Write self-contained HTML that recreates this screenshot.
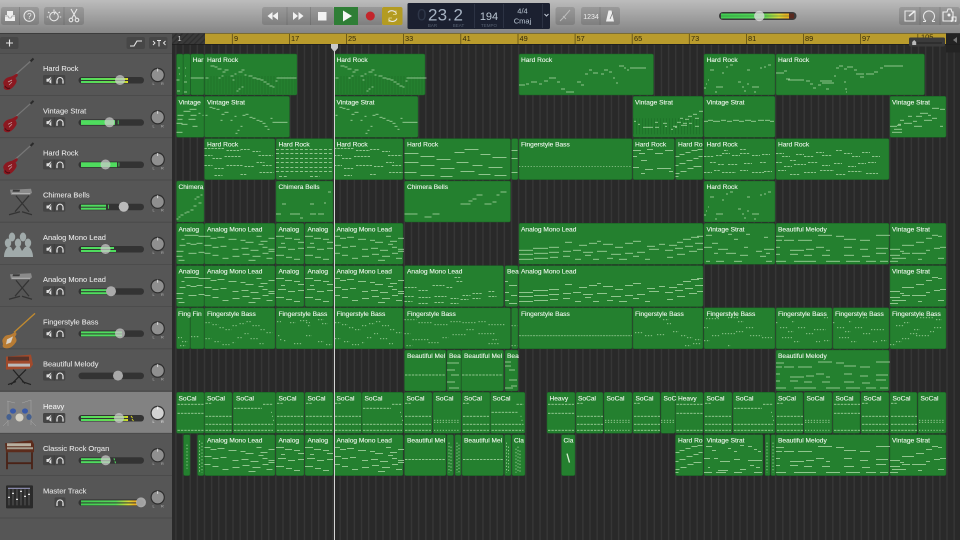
<!DOCTYPE html>
<html><head><meta charset="utf-8"><title>GarageBand</title>
<style>
html,body{margin:0;padding:0;background:#2a2a2a;width:960px;height:540px;overflow:hidden}
svg{display:block;filter:blur(.3px);font-family:"Liberation Sans",sans-serif}
.reg rect.r{fill:#24802f;stroke:#1b6225;stroke-width:.5}
.reg text{font-size:6.6px;fill:#eef6ec;stroke:#eef6ec;stroke-width:.12}
.n{fill:none;stroke:#b4dcae;stroke-width:.75}
.d{fill:none;stroke:#b4dcae;stroke-width:.75;stroke-dasharray:2.4 1}
.f{fill:none;stroke:#b4dcae;stroke-width:.75;stroke-dasharray:1.3 1.6}
.tn{font-size:7.5px;fill:#e6e6e6;stroke:#e6e6e6;stroke-width:.08}
.ic{fill:none;stroke:#e6e6e6;stroke-width:1.1}
.rn{font-size:7.4px;fill:#33290a}
.lcdl{font-size:4.5px;fill:#566070;text-anchor:middle}
</style></head><body>
<svg width="960" height="540" viewBox="0 0 960 540" xmlns="http://www.w3.org/2000/svg">
<defs>
<linearGradient id="tb" x1="0" y1="0" x2="0" y2="1"><stop offset="0" stop-color="#bcbcbc"/><stop offset="1" stop-color="#858585"/></linearGradient>
<linearGradient id="mg" x1="0" y1="0" x2="1" y2="0"><stop offset="0" stop-color="#3fce50"/><stop offset=".62" stop-color="#54d858"/><stop offset=".85" stop-color="#d8d838"/><stop offset=".95" stop-color="#e8b020"/></linearGradient>
<linearGradient id="mg2" x1="0" y1="0" x2="1" y2="0"><stop offset="0" stop-color="#4fdc5e"/><stop offset=".85" stop-color="#6fdc4e"/><stop offset="1" stop-color="#e6d820"/></linearGradient>
<pattern id="grid" patternUnits="userSpaceOnUse" x="175.2" y="0" width="7.14" height="10"><rect width="7.14" height="10" fill="#292929"/><rect width="1.4" height="10" fill="#363636"/></pattern>
<pattern id="hatch" patternUnits="userSpaceOnUse" width="4" height="4" patternTransform="rotate(45)"><rect width="4" height="4" fill="#3a3a3a"/><rect width="1.4" height="4" fill="#2e2e2e"/></pattern>

<!-- note patterns -->
<g id="hr1"><path d="M0 31h92" stroke="#1a6424" stroke-width="18" stroke-dasharray="1 2" fill="none" opacity=".4"/><path class="n" d="M1 24h3M6 12h4M10 13h3M13 15h4M18 18h3M20 16h4M14 24h2M17 22h2M26 22h3M30 20h2M28 26h2M34 18h4M37 16h3M32 37h2M34 35h2M37 33h2M40 21h2M44 22h4M48 24h4M52 25h4M56 26h3M59 28h3M62 30h3M65 32h3M68 33h2M71 27h2M72 24h20"/></g>
<path id="vs1" class="n" d="M1 19h2M5 11h3M8 12h3M12 13h3M17 18h3M20 16h4M16 24h2M30 20h2M26 24h2M38 19h3M41 18h3M45 21h3M48 22h3M52 24h3M55 25h3M58 27h3M60 30h3M63 33h2M66 22h2M68 26h2M70 26h13M36 30h2M33 34h2M31 37h2"/>
<path id="hr2" class="d" d="M0 10h20M22 12h14M36 11h10M48 13h8M54 17h14M0 17h8M8 20h10M20 18h16M0 27h8M10 30h10M22 27h16M40 28h10M52 24h8M58 27h10M10 37h8M36 36h6M55 34h14"/>
<path id="hr4" class="n" d="M6 16h4M18 19h2M22 13h2M26 11h3M43 16h3M56 14h2M60 13h2M64 11h3M4 26h1M2 30h1M0 34h2M12 33h7M34 28h3M38 33h2M40 37h2M43 30h2M50 38h2M48 33h7M11 38h2"/>
<path id="ap1" class="n" d="M0 13h6M6 15h6M13 14h7M24 16h8M36 17h5M41 19h8M52 13h5M54 21h5M56 18h7M64 15h6M0 22h7M8 24h6M16 23h6M28 26h6M37 25h7M46 27h8M58 24h5M64 26h6M0 30h6M8 32h6M18 35h6M28 33h7M38 31h7M48 33h8M58 30h6M64 28h6M44 37h7M62 35h6"/>
<path id="ap0" class="n" d="M8 12h6M14 12h8M22 13h6M3 22h6M10 20h4M14 21h6M20 20h6M0 28h7M12 30h8M22 29h6M0 33h6M2 37h6M5 16h3"/>
<path id="as" class="n" d="M0 13h8M9 15h7M18 16h6M2 24h8M12 26h7M22 25h6M0 32h8M10 34h6M18 36h6M5 20h4M22 19h6"/>
<path id="al" class="n" d="M0 27h14M14 25h15M30 24h10M46 19h7M60 22h8M70 20h8M78 18h4M84 21h10M96 24h8M106 20h8M114 18h8M128 23h8M140 21h6M150 22h8M158 19h6M164 16h8M172 14h8M178 13h6M0 31h14M15 30h14M30 29h10M44 28h8M54 27h8M64 29h10M78 28h10M92 31h10M106 30h8M118 29h8M130 26h10M146 27h8M156 25h8M166 23h8M176 20h8M0 36h14M15 35h14M31 34h8M44 33h7M56 36h6M66 32h6M74 36h6M88 35h6M100 36h8M114 33h6M126 36h5M148 34h6M158 31h8M170 28h8M178 26h6"/>
<path id="bm" class="n" d="M0 13h8M0 17h6M8 17h10M22 17h14M42 12h14M40 24h8M0 24h4M14 27h14M30 26h8M50 27h4M0 31h4M14 31h8M28 32h8M46 32h8M0 38h10M18 38h12M30 38h10M50 38h14M60 13h8M68 16h12M84 17h10M100 12h14M68 24h8M84 26h8M100 25h12M68 32h10M86 33h8M100 30h10M70 38h14M90 38h10M104 38h8"/>
<path id="v5" class="n" d="M0 26h10M12 22h12M10 28h4M26 19h8M36 15h6M42 12h6M48 13h4M0 32h10M12 30h8M22 30h14M36 27h4M44 25h6M50 24h6M0 38h8M2 35h14M28 36h4M48 35h6"/>
<path id="asc" class="n" d="M0 18h4M4 16h5M10 14h5M16 12h6M22 11h5M0 27h3M4 25h6M11 22h6M18 20h5M23 18h4M0 35h4M5 33h6M12 30h6M18 28h8M0 38h3"/>
<path id="fb1" class="f" d="M1 15h6M8 17h6M15 20h5M21 22h6M28 18h5M35 16h6M42 14h5M48 18h7M56 22h5M62 25h6M1 31h6M10 34h6M18 37h7M28 35h3M33 30h5M40 26h4M46 31h8M55 36h4"/>
<g id="sc1"><path class="d" d="M1 12h26M1 21h26M1 38h26"/></g>
<g id="sc2"><path class="d" d="M1 11h6M1 24h26M1 32h26M1 38h26"/></g>
<g id="sc3"><path class="f" d="M1 28h26M1 30h26M1 38h26"/></g>
<g id="sc4"><path class="d" d="M1 16h28M30 12h10M1 32h39M1 38h39"/><path class="n" d="M38 20h1M39 24h1M40 28h1"/></g>
<g id="sc5"><path class="d" d="M1 20h26M26 12h7M1 32h32M1 38h32"/><path class="n" d="M30 24h1M31 28h1"/></g>

<!-- track widgets -->
<g id="ms"><rect x="43" y="22" width="22.3" height="10" rx="1.5" fill="#454545"/><path d="M54.2 22v10" stroke="#383838" stroke-width=".6"/><path d="M46.5 25.8h2l2.8-2v7l-2.8-2h-2z" fill="#e0e0e0"/><path d="M51.8 24l-4 6.5" stroke="#454545" stroke-width=".6"/><path class="ic" d="M57 30v-2.5a3 3 0 0 1 6 0v2.5"/><path d="M56.4 28h1.2v2.6h-1.2zM62.4 28h1.2v2.6h-1.2z" fill="#e6e6e6"/></g>
<g id="so"><rect x="54.5" y="22" width="11" height="10" rx="1.5" fill="#454545"/><path class="ic" d="M57 30v-2.5a3 3 0 0 1 6 0v2.5"/><path d="M56.4 28h1.2v2.6h-1.2zM62.4 28h1.2v2.6h-1.2z" fill="#e6e6e6"/></g>
<g id="pan"><circle cx="157.7" cy="22" r="7.2" fill="#2e2e2e"/><circle cx="157.7" cy="22" r="6" fill="#8f8f8f"/><path d="M157.7 15.5v3" stroke="#eee" stroke-width=".8"/><text x="152.5" y="32" font-size="3.8" fill="#bbb">L</text><text x="161" y="32" font-size="3.8" fill="#bbb">R</text></g>
<rect id="st" x="78.5" y="24" width="65.5" height="6.5" rx="3.2" fill="#333"/>

<!-- instruments -->
<g id="gtr"><path d="M14 23L33 6" stroke="#777" stroke-width="1.2"/><path d="M30.500 8.500l3-3" stroke="#2a2a2a" stroke-width="2"/><path d="M4.500 27c2-3 6-3 8-4 2-1 4-3 5-2 1 2-1 3-2 4 1 2 2 3 0 6-2 3-5 6-8 6-3 0-4.500-2-3.500-4 0-2-2-3 .5-6z" fill="#8c1820"/><path d="M8 29l4-2M9 32l3-3" stroke="#c8a8a8" stroke-width=".7"/><path d="M5 33c1 2 3 3 5 2" stroke="#4c0a10" fill="none"/></g>
<g id="kb"><path d="M16 16L29 32M29 16L15 32" stroke="#333" stroke-width="1.200"/><path d="M9 35l11-3M22 32l10 3" stroke="#333" stroke-width="1.300"/><path d="M10 10l21-1 1 4-2 2H11z" fill="#8a8a8a"/><path d="M13 10h7l-.5 2h-7z" fill="#3a3a3a"/><path d="M12 14h18" stroke="#c8c8c8" stroke-width=".7"/></g>
</defs>

<!-- toolbar -->
<rect width="960" height="33" fill="url(#tb)"/>
<rect y="33" width="960" height="1" fill="#3c3c3c"/>
<g fill="#000" fill-opacity=".13">
<rect x="1" y="7" width="38" height="18" rx="2.5"/><rect x="44" y="7" width="40" height="18" rx="2.5"/>
<rect x="262" y="7" width="72" height="18" rx="2.5"/><rect x="358" y="7" width="24" height="18"/>
<rect x="555.5" y="7" width="19.5" height="18" rx="2.5"/><rect x="581" y="7" width="39" height="18" rx="2.5"/><rect x="899" y="7" width="61" height="18" rx="2.5"/>
</g>
<path d="M19.5 7v18M64 7v18M287 7v18M310.500 7v18M600 7v18M920 7v18M940 7v18" stroke="#000" stroke-opacity=".12"/>
<!-- inbox / help -->
<path d="M7 11h6v4h2v6H5v-6h2z" fill="#eee"/><path d="M5 16h3l1 2h2l1-2h3" stroke="#999" fill="none" stroke-width=".7"/>
<circle cx="29.300" cy="16" r="5.300" class="ic"/><text x="29.300" y="19" font-size="8" fill="#eee" text-anchor="middle">?</text>
<!-- dial -->
<circle cx="54" cy="16.500" r="4.300" class="ic"/><path class="ic" d="M54 9.500v2M48 12l1.500 1M60 12l-1.500 1M46.800 17h1.400M59.800 17h1.400M54 14.500l1.800-3"/>
<!-- scissors -->
<path class="ic" d="M71 9l5 9M77 9l-5 9"/><circle class="ic" cx="71" cy="20" r="1.800"/><circle class="ic" cx="77" cy="20" r="1.800"/>
<!-- transport -->
<path d="M272.500 12v8l-5-4zM278 12v8l-5.500-4z" fill="#f2f2f2"/><path d="M293 12v8l5-4zM298.500 12v8l5-4z" fill="#f2f2f2"/>
<rect x="318" y="12" width="8.500" height="8.500" fill="#f2f2f2"/>
<rect x="334" y="7" width="24" height="18" fill="#2f7e36"/><path d="M343 10.500v11l9-5.500z" fill="#f6f6f6"/>
<circle cx="370.300" cy="16" r="4.500" fill="#c3252b"/>
<rect x="382" y="7" width="20.500" height="18" rx="2" fill="#b39b22"/>
<path class="ic" stroke="#eadf9e" d="M388 12.500a5 5 0 0 1 8.500 1.500M397 18.500a5 5 0 0 1-8.500 1"/><path d="M396 10.500v4h-3M389 22v-4h3" fill="none" stroke="#eadf9e" stroke-width=".8"/>
<!-- LCD -->
<rect x="407.500" y="3" width="142.500" height="26" rx="1.500" fill="#1b2030"/>
<path d="M474.500 4v24M503.500 4v24M542.500 4v24" stroke="#333a4c" stroke-width=".7"/>
<text x="417" y="20.500" font-size="17" fill="#2e3648">0</text>
<text x="428" y="20.500" font-size="17" fill="#a6b2c2" letter-spacing=".2">23.</text>
<text x="453.500" y="20.500" font-size="17" fill="#a6b2c2">2</text>
<text class="lcdl" x="432.500" y="27">BAR</text><text class="lcdl" x="458.500" y="27">BEAT</text><text class="lcdl" x="489" y="27">TEMPO</text>
<text x="489" y="20" font-size="11" fill="#bcc7d4" text-anchor="middle">194</text>
<text x="522.500" y="13.500" font-size="7.500" fill="#bcc7d4" text-anchor="middle">4/4</text>
<text x="522.500" y="23.500" font-size="7.500" fill="#bcc7d4" text-anchor="middle">Cmaj</text>
<path d="M544.500 14l2 2 2-2" stroke="#c0c8d4" fill="none"/>
<!-- tuner/count -->
<path d="M560 21l4-4 6-7M563 16l3 3" stroke="#bcbcbc" stroke-width="1" fill="none"/>
<text x="591" y="19" font-size="7" fill="#eee" text-anchor="middle">1234</text>
<path d="M606 21.500l2.500-11h3l2.500 11z" fill="#eee"/><path d="M610 19l3-7" stroke="#777" stroke-width=".7"/>
<!-- master -->
<rect x="719" y="12" width="77.500" height="8" rx="4" fill="#3a3a3a"/>
<rect x="721" y="13.500" width="68" height="5" fill="url(#mg)"/><rect x="789" y="13.500" width="5" height="5" fill="#5a2a20"/>
<path d="M721 16h68" stroke="#356b3a" stroke-width=".6"/>
<circle cx="759.300" cy="16" r="5.200" fill="#dcdcdc" fill-opacity=".8"/>
<!-- right icons -->
<path class="ic" stroke-width="1.300" d="M905 11h10v10h-10z"/><path d="M909 16l6-5" stroke="#eee" stroke-width="1.500"/>
<path class="ic" d="M926 21a5.500 5.500 0 1 1 6 0M923 21.500h3M932 21.500h3"/>
<path d="M943 12h4l1-3h3l1 3h1v9h-10z" fill="none" stroke="#eee" stroke-width="1.100"/><circle cx="949" cy="15" r="1.500" fill="#eee"/><path d="M952 21v-4h4v4" fill="none" stroke="#eee"/><circle cx="951.500" cy="21" r="1" fill="#eee"/><circle cx="955.500" cy="21" r="1" fill="#eee"/>

<!-- track header column -->
<rect y="34" width="172" height="506" fill="#565656"/>
<rect y="392" width="172" height="41.500" fill="#828282"/>
<path d="M0 53.500h172M0 95.500h172M0 137.700h172M0 180h172M0 222.200h172M0 264.400h172M0 306.600h172M0 348.800h172M0 391h172M0 433.300h172M0 475.500h172M0 518h172" stroke="#484848" stroke-width=".8"/>
<rect y="34" width="172" height="19" fill="#535353"/>
<rect x="0" y="37" width="18.500" height="12" rx="2" fill="#474747"/><path d="M9.500 39.500v7M6 43h7" stroke="#e4e4e4" stroke-width="1.100"/>
<rect x="126.500" y="37" width="18.500" height="12" rx="2" fill="#474747"/><path d="M130 46h4l3-5h5" stroke="#e8e8e8" fill="none" stroke-width="1.100"/>
<rect x="149" y="37" width="18.500" height="12" rx="2" fill="#474747"/><path d="M157 40.500h4M159 40.500v6M153 41l2 2-2 2M165.500 41l-2 2 2 2" stroke="#e8e8e8" fill="none" stroke-width=".9"/>

<!-- tracks -->
<g transform="translate(0,53)"><use href="#gtr"/><text class="tn" x="43" y="18">Hard Rock</text><use href="#ms"/><use href="#st"/><rect x="81" y="25" width="47" height="2" fill="url(#mg2)"/><rect x="81" y="28" width="47" height="2" fill="url(#mg2)"/><circle cx="120" cy="27" r="5" fill="#ccc" fill-opacity=".72"/><use href="#pan"/></g>
<g transform="translate(0,95.300)"><use href="#gtr"/><text class="tn" x="43" y="18">Vintage Strat</text><use href="#ms"/><use href="#st"/><rect x="81" y="24.800" width="34" height="4.800" fill="#4fdc5e"/><rect x="117.800" y="25" width=".8" height="4" fill="#4fdc5e"/><circle cx="109.500" cy="27" r="5" fill="#ccc" fill-opacity=".72"/><use href="#pan"/></g>
<g transform="translate(0,137.500)"><use href="#gtr"/><text class="tn" x="43" y="18">Hard Rock</text><use href="#ms"/><use href="#st"/><rect x="81" y="24.800" width="36" height="4.800" fill="#4fdc5e"/><rect x="118.500" y="25" width=".8" height="4" fill="#4fdc5e"/><circle cx="105.500" cy="27" r="5" fill="#ccc" fill-opacity=".72"/><use href="#pan"/></g>
<g transform="translate(0,179.700)"><use href="#kb"/><text class="tn" x="43" y="18">Chimera Bells</text><use href="#ms"/><use href="#st"/><rect x="81" y="25" width="25" height="2" fill="#4fdc5e"/><rect x="81" y="28" width="25" height="2" fill="#4fdc5e"/><rect x="108" y="25" width=".8" height="4" fill="#4fdc5e"/><circle cx="123.700" cy="27" r="5" fill="#bbb"/><use href="#pan"/></g>
<g transform="translate(0,222)"><g fill="#a0aaaa"><ellipse cx="12" cy="15" rx="3.200" ry="4.500"/><ellipse cx="23" cy="15" rx="3.200" ry="4.500"/><ellipse cx="8" cy="21" rx="3.200" ry="4.500"/><ellipse cx="18" cy="21" rx="3.200" ry="4.500"/><ellipse cx="28" cy="21" rx="3.200" ry="4.500"/><path d="M4 35c0-7 4-10 4-10h3l2 4 3-4h4l2 4 3-4h4s4 3 4 10z"/></g><text class="tn" x="43" y="18">Analog Mono Lead</text><use href="#ms"/><use href="#st"/><rect x="81" y="25" width="33" height="2" fill="#4fdc5e"/><rect x="81" y="28" width="35" height="2" fill="#4fdc5e"/><circle cx="105.500" cy="27" r="5" fill="#ccc" fill-opacity=".72"/><use href="#pan"/></g>
<g transform="translate(0,264.200)"><use href="#kb"/><text class="tn" x="43" y="18">Analog Mono Lead</text><use href="#ms"/><use href="#st"/><rect x="81" y="25" width="26" height="2" fill="#4fdc5e"/><rect x="81" y="28" width="26" height="2" fill="#4fdc5e"/><circle cx="111" cy="27" r="5" fill="#aaa"/><use href="#pan"/></g>
<g transform="translate(0,306.400)"><path d="M14 26L35 7" stroke="#c08a30" stroke-width="1.400"/><path d="M4 31c2-3 5-2 7-3 2-1 4-3 5-2 1 2 0 3-1 4 2 3 2 5 0 7-2 3-5 5-8 5-4 0-5-2-4-4 0-2-2-4 1-7z" fill="#b87c34"/><path d="M7 33l6-3-2 6-5 2z" fill="#d8d0c4"/><text class="tn" x="43" y="18">Fingerstyle Bass</text><use href="#ms"/><use href="#st"/><rect x="81" y="25" width="41" height="2" fill="#4fdc5e"/><rect x="81" y="28" width="41" height="2" fill="#4fdc5e"/><circle cx="120" cy="27" r="5" fill="#ccc" fill-opacity=".72"/><use href="#pan"/></g>
<g transform="translate(0,348.600)"><path d="M13 21L25 35M26 21L11 36M8 36l8-3M22 33l9 3" stroke="#222" stroke-width="1.200"/><path d="M6 8l25-2 2 10-3 4-24 1z" fill="#a14a2c"/><path d="M8 8h21v4H8z" fill="#55332a"/><path d="M8 15h22v3H8z" fill="#bbb"/><text class="tn" x="43" y="18">Beautiful Melody</text><use href="#ms"/><use href="#st"/><circle cx="118" cy="27" r="5" fill="#a8a8a8"/><use href="#pan"/></g>
<g transform="translate(0,391)"><g stroke="#a8a8a8" stroke-width=".5" fill="none"><path d="M7 10l8 2M22 12l9-3M8 10v25M31 9v25M3 35l5-5M36 35l-5-5"/></g><ellipse cx="13" cy="20" rx="3" ry="2.600" fill="#3a5aa8"/><ellipse cx="25" cy="20" rx="3" ry="2.600" fill="#3a5aa8"/><ellipse cx="9" cy="26" rx="2.600" ry="3" fill="#45608f"/><ellipse cx="29" cy="26" rx="2.600" ry="3" fill="#45608f"/><circle cx="19.500" cy="26.500" r="4" fill="#d4d0c4"/><text class="tn" x="43" y="18" style="fill:#f4f4f4">Heavy</text><use href="#ms"/><use href="#st"/><rect x="81" y="25" width="47" height="2" fill="url(#mg2)"/><rect x="81" y="28" width="47" height="2" fill="url(#mg2)"/><path d="M131 25l1.500 2M132 28l1.500 2" stroke="#d8d820"/><circle cx="119" cy="27" r="5" fill="#ccc" fill-opacity=".72"/><g><circle cx="157.700" cy="22" r="7.200" fill="#333"/><circle cx="157.700" cy="22" r="6" fill="#d2d2d2"/><path d="M157.700 15.500v3" stroke="#fff"/><text x="152.500" y="32" font-size="3.800" fill="#eee">L</text><text x="161" y="32" font-size="3.800" fill="#eee">R</text></g></g>
<g transform="translate(0,433.200)"><path d="M5 10l27-3 2 4v8H6z" fill="#5c2c1c"/><path d="M7 10h24v3H7z" fill="#b8b0a0"/><path d="M7 14h26v2H7z" fill="#a8a090"/><path d="M7 19v17M32 19v17M7 30h25" stroke="#4a2216" stroke-width="1.800"/><text class="tn" x="43" y="18">Classic Rock Organ</text><use href="#ms"/><use href="#st"/><rect x="81" y="25" width="29" height="2" fill="#4fdc5e"/><rect x="81" y="28" width="29" height="2" fill="#4fdc5e"/><path d="M114 25l.5 2M115 28l.5 2" stroke="#4fdc5e"/><circle cx="105.700" cy="27" r="5" fill="#ccc" fill-opacity=".72"/><use href="#pan"/></g>
<g transform="translate(0,475.400)"><rect x="6" y="10" width="27" height="23" fill="#2a2a2a" rx="1"/><path d="M9 13v17M13 13v17M17 13v17M21 13v17M25 13v17M29 13v17" stroke="#777" stroke-width=".6"/><path d="M8 22h2M12 18h2M16 24h2M20 16h2M24 21h2M28 19h2" stroke="#ddd" stroke-width="1.300"/><path d="M8 13h22" stroke="#88a" stroke-width="1.200"/><text class="tn" x="43" y="18">Master Track</text><use href="#so"/><use href="#st"/><rect x="81" y="25" width="56" height="2" fill="url(#mg)"/><rect x="81" y="28" width="56" height="2" fill="url(#mg)"/><circle cx="141" cy="27" r="5" fill="#b5b5b5" fill-opacity=".85"/><use href="#pan"/></g>

<!-- timeline bg -->
<rect x="172" y="44" width="788" height="496" fill="url(#grid)"/>
<rect x="172" y="34" width="3" height="506" fill="#2a2a2a"/>
<rect x="172" y="33.500" width="33" height="10.500" fill="url(#hatch)"/>
<rect x="205" y="33.500" width="741" height="10.500" fill="#b99b2c"/>
<rect x="946" y="33.500" width="14" height="19" fill="#232323"/>
<path d="M957 37v6l-4-3z" fill="#777"/>
<rect x="172" y="44" width="788" height=".8" fill="#1f1f1f"/>
<path d="M232.300 34v10M289.400 34v10M346.500 34v10M403.600 34v10M460.800 34v10M518 34v10M575.100 34v10M632.200 34v10M689.300 34v10M746.400 34v10M803.500 34v10M860.600 34v10M917.800 34v10" stroke="#5c4c14" stroke-width=".8"/>
<text x="177.500" y="41" font-size="7.400" fill="#d4d4d4">1</text>
<text class="rn" x="234" y="41">9</text><text class="rn" x="291" y="41">17</text><text class="rn" x="348" y="41">25</text><text class="rn" x="405" y="41">33</text><text class="rn" x="462.500" y="41">41</text><text class="rn" x="519.500" y="41">49</text><text class="rn" x="576.500" y="41">57</text><text class="rn" x="634" y="41">65</text><text class="rn" x="691" y="41">73</text><text class="rn" x="748" y="41">81</text><text class="rn" x="805" y="41">89</text><text class="rn" x="862" y="41">97</text><text class="rn" x="921" y="39.500">105</text>
<rect x="909" y="37.500" width="36" height="9" rx="1.500" fill="#3b3b3b"/><path d="M914 43h28" stroke="#222"/><path d="M912.200 45v-3l2-2 2 2v3z" fill="#bbb"/>

<!-- regions -->
<g class="reg">
<g transform="translate(0,54)">
<rect class="r" x="176.500" width="6.500" height="41" rx="1.500"/><rect class="r" x="183.300" width="7" height="41" rx="1.500"/><rect class="r" x="190.700" width="13.300" height="41" rx="1.500"/><rect class="r" x="204.500" width="92.500" height="41" rx="1.500"/><rect class="r" x="334.500" width="90.500" height="41" rx="1.500"/><rect class="r" x="519" width="134.500" height="41" rx="1.500"/><rect class="r" x="704" width="71" height="41" rx="1.500"/><rect class="r" x="776" width="148.500" height="41" rx="1.500"/>
<text x="192.700" y="8">Har</text><text x="207" y="8">Hard Rock</text><text x="336.500" y="8">Hard Rock</text><text x="521" y="8">Hard Rock</text><text x="706.500" y="8">Hard Rock</text><text x="778" y="8">Hard Rock</text>
<path class="n" d="M178 14h2M179 20h1M176.500 26h3M177 37h3M185 14h1M185 22h1M184 28h3M184 38h3M190.700 24h13"/>
<use href="#hr1" x="204.500"/><use href="#hr1" x="334.500"/>
<use href="#hr4" x="704"/>
<path class="n" transform="translate(519,0)" d="M0 31h6M7 30h3M12 28h6M20 30h3M25 27h4M30 24h7M38 28h3M42 35h4M47 38h8M58 28h4M62 31h3M66 20h3M70 16h3M74 19h5M82 20h3M85 16h4M90 18h3M94 24h2M97 29h2M100 12h5M105 14h2M108 16h2M111 14h16"/>
<path class="n" transform="translate(776,0)" d="M0 19h8M8 17h3M10 25h4M12 26h16M30 27h4M34 30h3M37 34h3M42 31h3M44 27h12M46 29h12M58 22h2M60 14h3M63 12h4M68 15h3M71 13h6M78 16h3M80 20h8M84 23h4M90 20h8M98 18h4M104 14h3M108 12h4M112 12h15M68 28h2M69 35h2M70 38h1M50 35h3"/>
</g>
<g transform="translate(0,96.300)">
<rect class="r" x="176.500" width="27.500" height="41" rx="1.500"/><rect class="r" x="204.500" width="85" height="41" rx="1.500"/><rect class="r" x="334.500" width="83.500" height="41" rx="1.500"/><rect class="r" x="633" width="70" height="41" rx="1.500"/><rect class="r" x="704" width="71" height="41" rx="1.500"/><rect class="r" x="890" width="56" height="41" rx="1.500"/>
<text x="178.500" y="8">Vintage</text><text x="207" y="8">Vintage Strat</text><text x="336.500" y="8">Vintage Strat</text><text x="635" y="8">Vintage Strat</text><text x="706.500" y="8">Vintage Strat</text><text x="892" y="8">Vintage Strat</text>
<path class="n" transform="translate(176.500,0)" d="M7 15h7M13 13h7M1 19h6M14 19h6M1 23h5M12 23h7M0 27h6M5 28h6M16 30h5M0 36h6M22 17h2M26 19h1"/>
<use href="#vs1" x="204.500"/><use href="#vs1" x="334.500"/>
<path d="M0 30h70" transform="translate(633,0)" stroke="#1a6424" stroke-width="16" stroke-dasharray="1 2" fill="none" opacity=".4"/>
<path class="n" transform="translate(633,0)" d="M1 25h2M5 28h2M10 31h8M18 31h2M22 31h4M22 26h3M30 27h4M32 30h2M40 30h4M42 31h2M44 26h4M47 22h3M50 27h4M52 23h4M55 20h4M56 27h3M60 18h4M62 22h4M66 15h4M62 30h4M48 29h6M38 33h2"/>
<path class="n" transform="translate(704,0)" d="M0 25h4M4 24h5M9 25h7M17 24h5M23 25h5M29 24h6M35 25h5M41 24h6M47 25h5M54 24h6M61 24h5M66 25h4"/>
<path class="n" transform="translate(890,0)" d="M0 30h7M7 29h4M14 27h8M23 25h4M10 24h4M18 20h4M26 20h6M30 17h8M38 19h3M34 24h8M42 22h5M42 12h7M50 13h5M50 30h3M2 36h10M4 33h8M24 30h8M8 28h3"/>
</g>
<g transform="translate(0,138.600)">
<rect class="r" x="204.500" width="70.500" height="41" rx="1.500"/><rect class="r" x="276" width="57" height="41" rx="1.500"/><rect class="r" x="334" width="69" height="41" rx="1.500"/><rect class="r" x="404.500" width="106" height="41" rx="1.500"/><rect class="r" x="511.500" width="6.500" height="41" rx="1.500"/><rect class="r" x="519" width="113" height="41" rx="1.500"/><rect class="r" x="633" width="41.500" height="41" rx="1.500"/><rect class="r" x="675.500" width="27.500" height="41" rx="1.500"/><rect class="r" x="704" width="71" height="41" rx="1.500"/><rect class="r" x="776" width="113" height="41" rx="1.500"/>
<text x="207" y="8">Hard Rock</text><text x="278.500" y="8">Hard Rock</text><text x="336.500" y="8">Hard Rock</text><text x="407" y="8">Hard Rock</text><text x="521" y="8">Fingerstyle Bass</text><text x="635" y="8">Hard Rock</text><text x="678" y="8">Hard Ro</text><text x="706.500" y="8">Hard Rock</text><text x="778" y="8">Hard Rock</text>
<use href="#hr2" x="204.500"/><use href="#hr2" x="334"/>
<path class="d" transform="translate(276,0)" d="M0 11h56M0 15h56M0 20h56M0 24h56M0 29h56M0 33h56M3 38h8M34 38h10" style="stroke-dasharray:3 1.800"/>
<path class="n" transform="translate(404.500,0)" d="M0 15h14M16 18h14M32 21h14M50 14h10M60 11h14M76 16h10M88 19h14M0 24h14M16 27h14M36 30h14M52 24h12M68 27h10M84 29h14M0 34h12M16 37h14M36 38h12M56 33h14M74 36h12M90 37h12"/>
<path class="n" d="M511.500 12h6M511.500 20h6M511.500 34h6"/>
<path class="f" transform="translate(519,0)" d="M0 28h113" opacity=".8"/>
<path class="n" transform="translate(633,0)" d="M0 12h8M6 15h6M14 11h6M22 15h8M32 12h8M0 18h4M8 22h6M0 29h6M12 31h8M24 30h14M8 35h4M36 33h4"/>
<use href="#asc" x="675.500"/>
<path class="d" transform="translate(704,0)" d="M0 18h10M12 17h6M18 15h8M28 17h8M36 15h10M48 17h8M58 16h8M6 24h6M14 26h6M24 26h10M40 25h8M56 24h6M0 34h8M10 32h6M18 34h14M36 32h8M48 34h12M60 33h8M20 12h4M36 11h6"/>
<path class="d" transform="translate(776,0)" d="M0 15h8M6 18h8M14 22h6M20 16h8M28 18h10M40 14h8M46 17h10M60 12h6M68 15h8M76 18h8M86 14h8M96 18h8M0 24h6M8 28h8M18 26h12M32 24h10M46 27h8M58 25h8M72 28h8M82 25h8M92 24h8M2 32h8M14 36h10M28 34h12M44 32h14M60 36h10M72 33h14M90 35h12"/>
</g>
<g transform="translate(0,181)">
<rect class="r" x="176.500" width="27.500" height="41" rx="1.500"/><rect class="r" x="276" width="57" height="41" rx="1.500"/><rect class="r" x="404.500" width="106" height="41" rx="1.500"/><rect class="r" x="704" width="71" height="41" rx="1.500"/>
<text x="178.500" y="8">Chimera</text><text x="278.500" y="8">Chimera Bells</text><text x="407" y="8">Chimera Bells</text><text x="706.500" y="8">Hard Rock</text>
<path class="n" transform="translate(176.500,0)" d="M0 38h2M2 36h2M4 34h3M8 32h2M10 31h3M14 29h3M17 25h3M18 18h2M20 16h3M22 22h3M24 14h2M26 8h1"/>
<path class="n" transform="translate(276,0)" d="M6 23h4M34 23h4M0 33h5M14 33h10M34 33h6M42 33h6M24 37h3M52 11h3M48 22h2M44 33h3"/>
<path class="n" transform="translate(404.500,0)" d="M0 33h13M28 33h7M20 36h7M56 23h6M62 23h4M64 20h4M68 18h4M72 14h6M80 23h7M88 21h4M92 14h3M96 11h6"/>
<use href="#hr4" x="704"/>
</g>
<g transform="translate(0,223.300)">
<rect class="r" x="176.500" width="27.500" height="41" rx="1.500"/><rect class="r" x="204.500" width="70.500" height="41" rx="1.500"/><rect class="r" x="276" width="28" height="41" rx="1.500"/><rect class="r" x="305" width="28" height="41" rx="1.500"/><rect class="r" x="334" width="69" height="41" rx="1.500"/><rect class="r" x="519" width="184" height="41" rx="1.500"/><rect class="r" x="704" width="71" height="41" rx="1.500"/><rect class="r" x="776" width="113" height="41" rx="1.500"/><rect class="r" x="890" width="56" height="41" rx="1.500"/>
<text x="178.500" y="8">Analog</text><text x="207" y="8">Analog Mono Lead</text><text x="278.500" y="8">Analog</text><text x="307.500" y="8">Analog</text><text x="336.500" y="8">Analog Mono Lead</text><text x="521" y="8">Analog Mono Lead</text><text x="706.500" y="8">Vintage Strat</text><text x="778" y="8">Beautiful Melody</text><text x="892" y="8">Vintage Strat</text>
<use href="#ap0" x="176.500"/><use href="#ap1" x="204.500"/><use href="#as" x="276"/><use href="#as" x="305"/><use href="#ap1" x="334"/><use href="#al" x="519"/>
<path class="n" transform="translate(704,0)" d="M2 12h6M24 11h4M42 11h4M8 20h6M30 16h4M0 24h8M14 26h10M40 24h4M60 26h10M52 28h6M10 30h4M22 30h10M36 32h8M56 33h6M62 30h4M2 38h4M12 38h8M30 38h8M62 38h6M60 14h4"/>
<use href="#bm" x="776"/><use href="#v5" x="890"/>
</g>
<g transform="translate(0,265.600)">
<rect class="r" x="176.500" width="27.500" height="41" rx="1.500"/><rect class="r" x="204.500" width="70.500" height="41" rx="1.500"/><rect class="r" x="276" width="28" height="41" rx="1.500"/><rect class="r" x="305" width="28" height="41" rx="1.500"/><rect class="r" x="334" width="69" height="41" rx="1.500"/><rect class="r" x="404.500" width="99" height="41" rx="1.500"/><rect class="r" x="505" width="13" height="41" rx="1.500"/><rect class="r" x="519" width="184" height="41" rx="1.500"/><rect class="r" x="890" width="56" height="41" rx="1.500"/>
<text x="178.500" y="8">Analog</text><text x="207" y="8">Analog Mono Lead</text><text x="278.500" y="8">Analog</text><text x="307.500" y="8">Analog</text><text x="336.500" y="8">Analog Mono Lead</text><text x="407" y="8">Analog Mono Lead</text><text x="507" y="8">Bea</text><text x="521" y="8">Analog Mono Lead</text><text x="892" y="8">Vintage Strat</text>
<use href="#ap0" x="176.500"/><use href="#ap1" x="204.500"/><use href="#as" x="276"/><use href="#as" x="305"/><use href="#ap1" x="334"/>
<path class="d" transform="translate(404.500,0)" d="M0 22h12M14 25h10M28 20h12M42 22h6M50 12h6M52 16h6M0 31h10M14 32h12M30 31h12M46 33h8M58 30h8M68 28h10M84 26h6M0 36h8M14 38h10M30 37h10M46 38h8M56 34h8M68 33h8M84 31h8"/>
<path class="n" transform="translate(505,0)" d="M0 16h3M4 20h8M0 27h4M6 30h6M0 35h4M4 38h8"/>
<use href="#al" x="519"/><use href="#v5" x="890"/>
</g>
<g transform="translate(0,307.800)">
<rect class="r" x="176.500" width="13.500" height="41" rx="1.500"/><rect class="r" x="190.500" width="13.500" height="41" rx="1.500"/><rect class="r" x="204.500" width="70.500" height="41" rx="1.500"/><rect class="r" x="276" width="57" height="41" rx="1.500"/><rect class="r" x="334" width="69" height="41" rx="1.500"/><rect class="r" x="404.500" width="106" height="41" rx="1.500"/><rect class="r" x="511.500" width="6.500" height="41" rx="1.500"/><rect class="r" x="519" width="113" height="41" rx="1.500"/><rect class="r" x="633" width="70" height="41" rx="1.500"/><rect class="r" x="704" width="71" height="41" rx="1.500"/><rect class="r" x="776" width="56" height="41" rx="1.500"/><rect class="r" x="833" width="56" height="41" rx="1.500"/><rect class="r" x="890" width="56" height="41" rx="1.500"/>
<text x="178" y="8">Fing</text><text x="192.500" y="8">Fin</text><text x="207" y="8">Fingerstyle Bass</text><text x="278.500" y="8">Fingerstyle Bass</text><text x="336.500" y="8">Fingerstyle Bass</text><text x="407" y="8">Fingerstyle Bass</text><text x="521" y="8">Fingerstyle Bass</text><text x="635" y="8">Fingerstyle Bass</text><text x="706.500" y="8">Fingerstyle Bass</text><text x="778" y="8">Fingerstyle Bass</text><text x="835" y="8">Fingerstyle Bass</text><text x="892" y="8">Fingerstyle Bass</text>
<path class="f" d="M178 30h4M182 34h6M180 38h6M191 29h6M197 29h2"/>
<use href="#fb1" x="204.500"/><use href="#fb1" x="334"/>
<path class="f" transform="translate(276,0)" d="M1 14h4M14 15h6M24 13h8M30 15h4M32 18h3M42 12h6M46 16h6M2 28h2M4 32h2M8 33h2M18 36h8M30 28h6M42 34h6M50 37h6"/>
<path class="f" transform="translate(404.500,0)" d="M0 12h12M14 15h14M30 17h14M46 14h10M58 15h14M74 14h8M84 17h16M0 26h6M8 32h16M24 35h10M38 30h6M48 27h14M62 22h8M74 26h16M88 32h6M2 38h6M84 36h10"/>
<path class="f" d="M511.500 18h6M511.500 38h6"/>
<path class="n" transform="translate(519,0)" d="M0 28h113" style="stroke-dasharray:2 .8;opacity:.8"/>
<path class="f" transform="translate(633,0)" d="M2 25h8M12 28h8M24 27h8M30 12h6M34 16h4M40 24h6M48 28h6M54 30h6M52 38h6M60 36h8M62 32h6"/>
<path class="f" transform="translate(704,0)" d="M2 11h14M24 10h10M34 14h6M0 20h4M8 28h8M18 26h14M32 24h8M42 20h8M46 28h12M58 30h10M0 33h6M24 38h3"/>
<path class="f" transform="translate(776,0)" d="M0 15h2M4 20h8M12 24h6M16 14h3M22 20h8M30 26h8M38 22h12M48 10h4M6 30h10M18 34h6M40 34h4M48 33h6"/>
<path class="f" transform="translate(833,0)" d="M0 15h2M4 20h8M12 24h6M16 14h3M22 20h8M30 26h8M38 22h14M30 10h4M6 30h10M18 34h6M40 34h4M48 33h6"/>
<path class="f" transform="translate(890,0)" d="M0 37h6M6 34h6M12 31h8M20 26h8M26 28h14M40 24h4M44 20h8M6 18h8M14 15h6M24 22h6M30 10h14M46 12h6"/>
</g>
<g transform="translate(0,350)">
<rect class="r" x="404.500" width="41.500" height="41" rx="1.500"/><rect class="r" x="447" width="14" height="41" rx="1.500"/><rect class="r" x="461.500" width="42" height="41" rx="1.500"/><rect class="r" x="505" width="13" height="41" rx="1.500"/><rect class="r" x="776" width="113" height="41" rx="1.500"/>
<text x="407" y="8">Beautiful Mel</text><text x="449" y="8">Bea</text><text x="464" y="8">Beautiful Mel</text><text x="507" y="8">Bea</text><text x="778" y="8">Beautiful Melody</text>
<path class="d" d="M405 25h40M462 25h41"/><path class="n" d="M447 13h12M447 20h8M451 25h8M447 32h8M449 38h10M505 12h6M505 16h6M509 20h6M509 30h8M505 38h8M511 36h6"/>
<use href="#bm" x="776"/>
</g>
<g transform="translate(0,392.300)">
<rect class="r" x="176.500" width="27.500" height="41" rx="1.500"/><rect class="r" x="204.500" width="27.500" height="41" rx="1.500"/><rect class="r" x="233" width="42.500" height="41" rx="1.500"/><rect class="r" x="276" width="28" height="41" rx="1.500"/><rect class="r" x="305" width="28" height="41" rx="1.500"/><rect class="r" x="334" width="27.500" height="41" rx="1.500"/><rect class="r" x="362" width="41" height="41" rx="1.500"/><rect class="r" x="404" width="28" height="41" rx="1.500"/><rect class="r" x="433" width="28" height="41" rx="1.500"/><rect class="r" x="462" width="28" height="41" rx="1.500"/><rect class="r" x="490.500" width="34.500" height="41" rx="1.500"/><rect class="r" x="547" width="28" height="41" rx="1.500"/><rect class="r" x="576" width="27" height="41" rx="1.500"/><rect class="r" x="604" width="28" height="41" rx="1.500"/><rect class="r" x="633" width="27" height="41" rx="1.500"/><rect class="r" x="661" width="14" height="41" rx="1.500"/><rect class="r" x="675.500" width="27.500" height="41" rx="1.500"/><rect class="r" x="704" width="28" height="41" rx="1.500"/><rect class="r" x="733" width="42" height="41" rx="1.500"/><rect class="r" x="776" width="27" height="41" rx="1.500"/><rect class="r" x="804" width="28" height="41" rx="1.500"/><rect class="r" x="833" width="27" height="41" rx="1.500"/><rect class="r" x="861" width="28" height="41" rx="1.500"/><rect class="r" x="890" width="27" height="41" rx="1.500"/><rect class="r" x="918" width="28" height="41" rx="1.500"/>
<text x="178.500" y="8">SoCal</text><text x="207" y="8">SoCal</text><text x="236" y="8">SoCal</text><text x="278.500" y="8">SoCal</text><text x="307.500" y="8">SoCal</text><text x="336.500" y="8">SoCal</text><text x="364.500" y="8">SoCal</text><text x="406.500" y="8">SoCal</text><text x="435.500" y="8">SoCal</text><text x="464" y="8">SoCal</text><text x="492.500" y="8">SoCal</text><text x="549.500" y="8">Heavy</text><text x="578" y="8">SoCal</text><text x="606.500" y="8">SoCal</text><text x="635.500" y="8">SoCal</text><text x="663.500" y="8">SoC</text><text x="678" y="8">Heavy</text><text x="706.500" y="8">SoCal</text><text x="735.500" y="8">SoCal</text><text x="778" y="8">SoCal</text><text x="806.500" y="8">SoCal</text><text x="835.500" y="8">SoCal</text><text x="863.500" y="8">SoCal</text><text x="892.500" y="8">SoCal</text><text x="920.500" y="8">SoCal</text>
<use href="#sc1" x="176.500"/><use href="#sc2" x="204.500"/><use href="#sc4" x="233"/><use href="#sc2" x="276"/><use href="#sc2" x="305"/><use href="#sc2" x="334"/><use href="#sc4" x="362"/><use href="#sc2" x="404"/><use href="#sc3" x="433"/><use href="#sc2" x="462"/><use href="#sc5" x="490.500"/>
<use href="#sc1" x="547"/><use href="#sc2" x="576"/><use href="#sc3" x="604"/><use href="#sc2" x="633"/><path class="f" d="M661 28h14M661 30h14"/><use href="#sc1" x="675.500"/><use href="#sc2" x="704"/><use href="#sc4" x="733"/><use href="#sc2" x="776"/><use href="#sc3" x="804"/><use href="#sc1" x="833"/><use href="#sc2" x="861"/><use href="#sc2" x="890"/><use href="#sc3" x="918"/>
</g>
<g transform="translate(0,434.600)">
<rect class="r" x="183.500" width="6.500" height="41" rx="1.500"/><rect class="r" x="197.500" width="6.500" height="41" rx="1.500"/><rect class="r" x="204.500" width="70.500" height="41" rx="1.500"/><rect class="r" x="276" width="28" height="41" rx="1.500"/><rect class="r" x="305" width="28" height="41" rx="1.500"/><rect class="r" x="334" width="69" height="41" rx="1.500"/><rect class="r" x="404.500" width="41.500" height="41" rx="1.500"/><rect class="r" x="447" width="6.500" height="41" rx="1.500"/><rect class="r" x="455" width="6" height="41" rx="1.500"/><rect class="r" x="462" width="41.500" height="41" rx="1.500"/><rect class="r" x="504.500" width="6.500" height="41" rx="1.500"/><rect class="r" x="512" width="13" height="41" rx="1.500"/><rect class="r" x="561.500" width="13.500" height="41" rx="1.500"/><rect class="r" x="675.500" width="27.500" height="41" rx="1.500"/><rect class="r" x="704" width="59" height="41" rx="1.500"/><rect class="r" x="765" width="5" height="41" rx="1"/><rect class="r" x="771" width="4.500" height="41" rx="1"/><rect class="r" x="776" width="113" height="41" rx="1.500"/><rect class="r" x="890" width="56" height="41" rx="1.500"/>
<text x="207" y="8">Analog Mono Lead</text><text x="278.500" y="8">Analog</text><text x="307.500" y="8">Analog</text><text x="336.500" y="8">Analog Mono Lead</text><text x="407" y="8">Beautiful Mel</text><text x="464" y="8">Beautiful Mel</text><text x="514" y="8">Cla</text><text x="563.500" y="8">Cla</text><text x="678" y="8">Hard Ro</text><text x="706.500" y="8">Vintage Strat</text><text x="778" y="8">Beautiful Melody</text><text x="892" y="8">Vintage Strat</text>
<path class="f" d="M187 10v24M199.500 6v32M202 8v30M449 8v30M451 12v26M457 8v30M459 10v28M506.500 8v30M508.500 12v26M516 14v24M518 12v26M520 16v22M767 8v30M773 8v30" style="stroke-dasharray:1.300 2"/>
<use href="#ap1" x="204.500"/><use href="#as" x="276"/><use href="#as" x="305"/><use href="#ap1" x="334"/>
<path class="d" d="M405 25h40M463 25h40"/>
<path d="M567 19l2.500 9" stroke="#d6ecd0" stroke-width="1.300"/>
<use href="#asc" x="675.500"/>
<path class="n" transform="translate(704,0)" d="M2 12h6M36 11h4M44 12h4M8 16h4M24 14h3M30 17h3M50 15h3M54 17h3M0 24h6M10 24h4M16 27h10M30 25h6M44 26h14M4 33h2M14 36h10M36 35h6M46 31h4M52 33h4M0 38h8M12 38h10M30 38h8M50 38h8"/>
<use href="#bm" x="776"/><use href="#v5" x="890"/>
</g>
</g>

<!-- playhead -->
<path d="M334.500 44v496" stroke="#d4d4d4" stroke-width="1"/>
<path d="M331 44h7v4l-3.500 4-3.500-4z" fill="#c9c9c9"/>
</svg>
</body></html>
